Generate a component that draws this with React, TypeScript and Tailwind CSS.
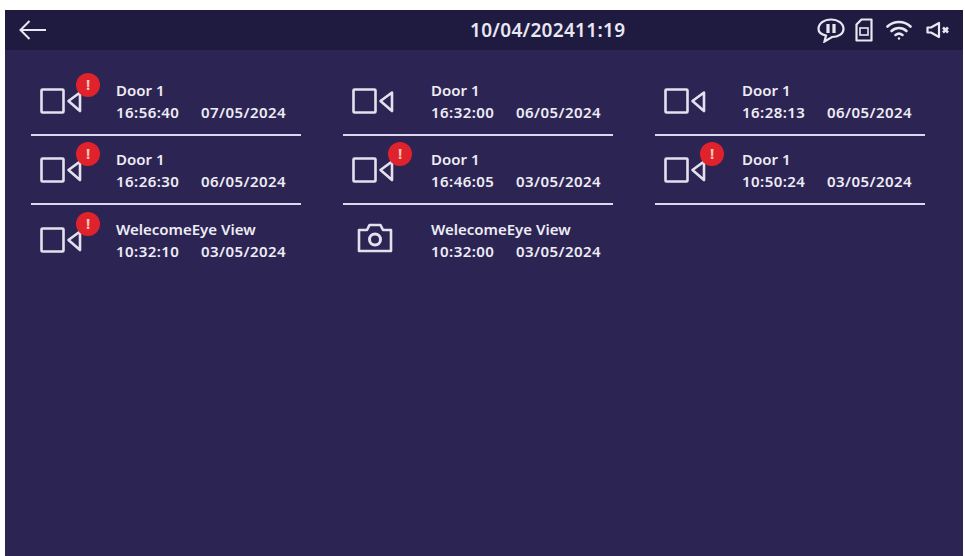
import React from 'react';

type Entry = {
    title: string;
    time: string;
    date: string;
    kind: 'video' | 'photo';
    alert?: boolean;
    divider?: boolean;
    iconBox: string;
};

const entries: Entry[] = [
    { title: 'Door 1', time: '16:56:40', date: '07/05/2024', kind: 'video', alert: true, divider: true, iconBox: 'w-[76px]' },
    { title: 'Door 1', time: '16:32:00', date: '06/05/2024', kind: 'video', divider: true, iconBox: 'w-[79px]' },
    { title: 'Door 1', time: '16:28:13', date: '06/05/2024', kind: 'video', divider: true, iconBox: 'w-[78px]' },
    { title: 'Door 1', time: '16:26:30', date: '06/05/2024', kind: 'video', alert: true, divider: true, iconBox: 'w-[76px]' },
    { title: 'Door 1', time: '16:46:05', date: '03/05/2024', kind: 'video', alert: true, divider: true, iconBox: 'w-[79px]' },
    { title: 'Door 1', time: '10:50:24', date: '03/05/2024', kind: 'video', alert: true, divider: true, iconBox: 'w-[78px]' },
    { title: 'WelecomeEye View', time: '10:32:10', date: '03/05/2024', kind: 'video', alert: true, iconBox: 'w-[76px]' },
    { title: 'WelecomeEye View', time: '10:32:00', date: '03/05/2024', kind: 'photo', iconBox: 'w-[79px]' },
];

function VideoIcon() {
    return (
        <svg width="42" height="26" viewBox="0 0 42 26" fill="none" stroke="#e4e1ef" strokeWidth="2.6">
            <rect x="1.5" y="1.5" width="22" height="23" rx="1" />
            <path d="M40 4.5 L28.5 13 L40 23 Z" strokeLinejoin="round" />
        </svg>
    );
}

function PhotoIcon() {
    return (
        <svg className="ml-[5px] mb-[3px]" width="36" height="30" viewBox="0 0 36 30" fill="none" stroke="#e4e1ef" strokeWidth="2.6" strokeLinejoin="round">
            <path d="M2 7 H10 L12.5 2 H23.5 L26 7 H34 V28 H2 Z" />
            <circle cx="18" cy="16.5" r="5.5" strokeWidth="3" />
        </svg>
    );
}

function Row({ entry }: { entry: Entry }) {
    return (
        <div className={`h-[69px] flex items-center pl-[9px] ${entry.divider ? 'border-b-2 border-[#dcd8ee]' : ''}`}>
            <div className={`relative flex items-center ${entry.iconBox}`}>
                {entry.kind === 'video' ? <VideoIcon /> : <PhotoIcon />}
                {entry.alert && (
                    <div className="absolute left-[36px] top-[-15px] w-[24px] h-[24px] rounded-full bg-[#e0222c] flex items-center justify-center text-[15px] font-bold leading-none text-[#f6c9b8]">
                        !
                    </div>
                )}
            </div>
            <div className="text-[15px] leading-[22px] font-semibold text-[#eeecf5]">
                <div className="whitespace-nowrap">{entry.title}</div>
                <div className="flex whitespace-nowrap tracking-[0.45px]">
                    <span className="w-[85px]">{entry.time}</span>
                    <span>{entry.date}</span>
                </div>
            </div>
        </div>
    );
}

export default function App() {
    return (
        <div className="h-screen bg-white pl-[5px] pt-[10px] pr-[2px] font-['Noto_Sans',sans-serif]">
            <div className="h-full bg-[#2c2553] flex flex-col">
                <div className="h-[40px] shrink-0 bg-[#1e1a40] flex items-center text-[#e9e7f2]">
                    <svg className="ml-[14px]" width="27" height="20" viewBox="0 0 27 20" fill="none" stroke="currentColor" strokeWidth="2">
                        <path d="M1.5 10 H27 M10.5 1 L1.5 10 L10.5 19" />
                    </svg>
                    <div className="ml-[424px] text-[19px] font-semibold tracking-[0.3px]">10/04/202411:19</div>
                    <div className="ml-auto mr-[13px] flex items-center">
                        <svg width="28" height="26" viewBox="0 0 28 26" fill="none" stroke="currentColor" strokeWidth="2.2">
                            <path d="M14 2.5 C21 2.5 26.5 6.5 26.5 12 C26.5 17 21 20 15 20 L7.5 24.5 L9 18.5 C4.5 17.5 1.5 15 1.5 12 C1.5 6.5 7 2.5 14 2.5 Z" />
                            <path d="M11 7 V16 M17 7 V16" strokeWidth="3.2" />
                        </svg>
                        <svg className="ml-[10px]" width="18" height="24" viewBox="0 0 18 24" fill="none" stroke="currentColor" strokeWidth="2.2">
                            <path d="M6.5 1.5 H16.5 V22.5 H1.5 V6.5 Z" strokeLinejoin="round" />
                            <rect x="5" y="10" width="8" height="7" strokeWidth="1.6" />
                        </svg>
                        <svg className="ml-[13px]" width="26" height="22" viewBox="0 0 26 22" fill="none" stroke="currentColor" strokeWidth="2.6" strokeLinecap="round">
                            <path d="M1.5 7.5 C8 1.5 18 1.5 24.5 7.5" />
                            <path d="M5.5 12 C10 8 16 8 20.5 12" />
                            <path d="M9.5 16 C11.5 14.5 14.5 14.5 16.5 16" />
                            <circle cx="13" cy="19.5" r="1.2" fill="currentColor" stroke="none" />
                        </svg>
                        <svg className="ml-[14px]" width="24" height="18" viewBox="0 0 24 18" fill="none" stroke="currentColor" strokeWidth="2.2">
                            <path d="M1.5 6.5 H5 L13 2 V16 L5 11.5 H1.5 Z" strokeLinejoin="round" />
                            <path d="M17 6.5 L22 11.5 M22 6.5 L17 11.5" strokeWidth="2.6" />
                        </svg>
                    </div>
                </div>
                <div className="ml-[26px] mt-[17px] grid grid-cols-[270px_270px_270px] gap-x-[42px] content-start">
                    {entries.map((entry, i) => (
                        <Row key={i} entry={entry} />
                    ))}
                </div>
            </div>
        </div>
    );
}
